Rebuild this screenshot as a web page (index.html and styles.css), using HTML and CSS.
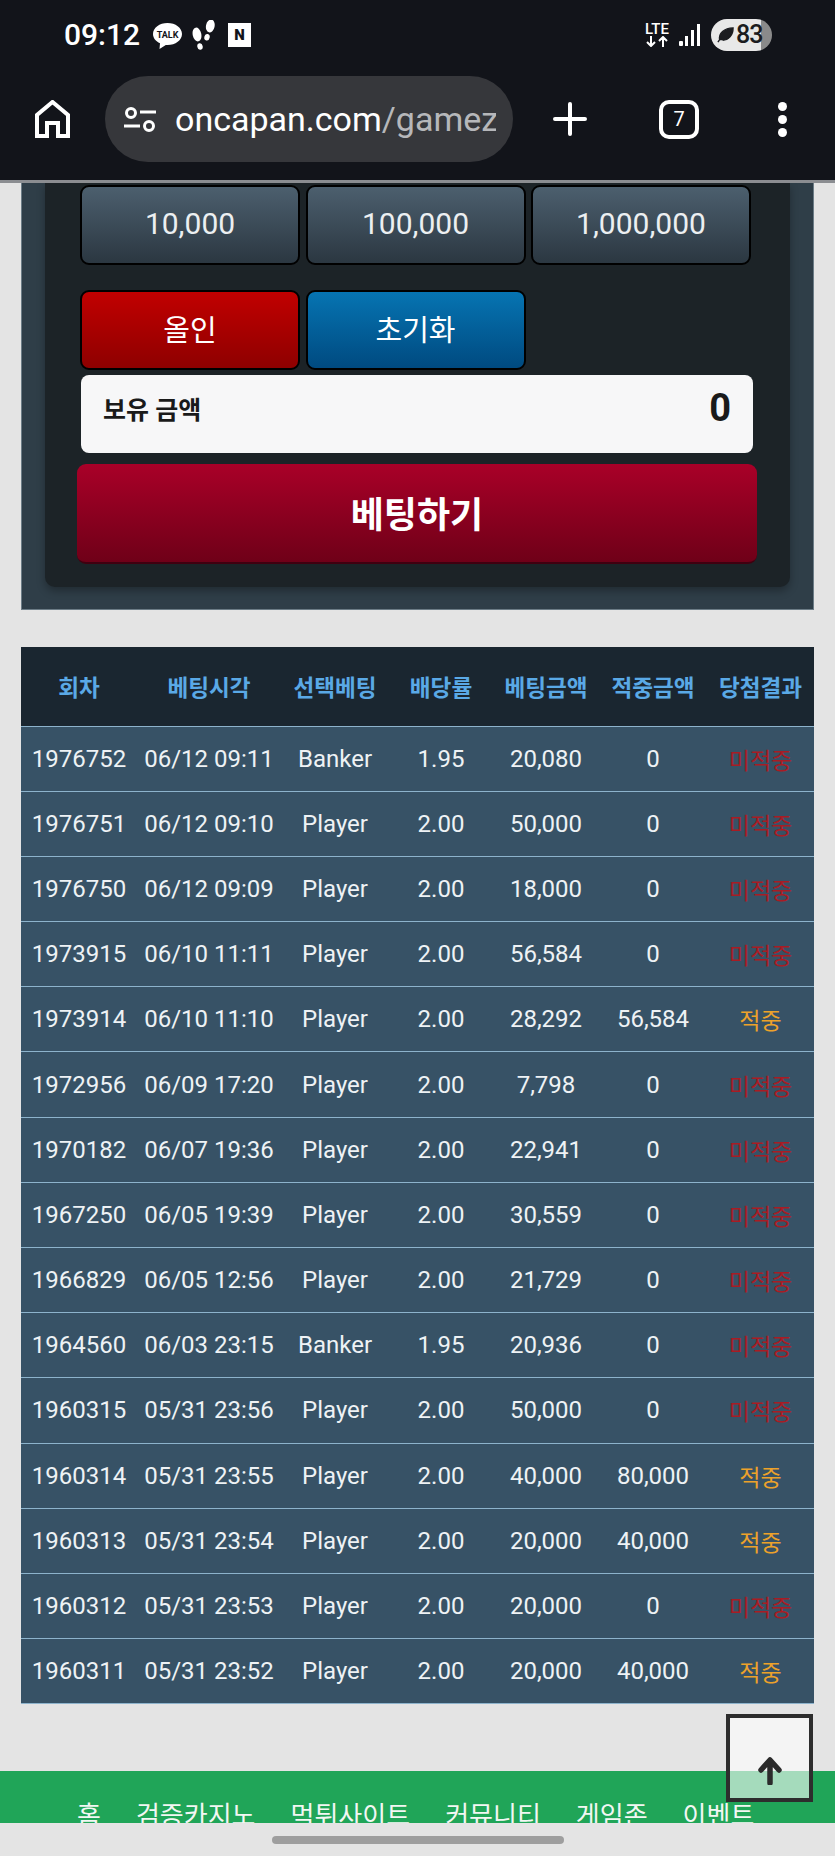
FILE: index.html
```html
<!DOCTYPE html>
<html lang="ko">
<head>
    <meta charset="UTF-8">
    <meta name="viewport" content="width=device-width, initial-scale=1.0">
    <title>oncapan.com</title>
    <link rel="stylesheet" href="styles.css">
</head>
<body>
    <div class="screen">
        <header class="browser">
            <div class="status">
                <span class="clock">09:12</span>
                <svg class="ic-talk" viewBox="0 0 29 26"><path d="M14.5 0C6.5 0 0 4.9 0 11c0 4 2.8 7.400 7 9.300L6.500 26l6.300-4.100c.6 0 1.100.1 1.700.1C22.500 22 29 17.100 29 11S22.500 0 14.500 0z" fill="#fff"/><text x="14.500" y="14.500" class="talk-text" text-anchor="middle">TALK</text></svg>
                <svg class="ic-steps" viewBox="0 0 23 30" fill="#fff"><ellipse cx="5" cy="14.500" rx="4.300" ry="7" transform="rotate(-12 5 14.500)"/><ellipse cx="8" cy="26.500" rx="2.700" ry="3.300" transform="rotate(-12 8 26.500)"/><ellipse cx="18.300" cy="6" rx="4.300" ry="6.500" transform="rotate(12 18.300 6)"/><ellipse cx="15" cy="17.300" rx="2.700" ry="3.300" transform="rotate(12 15 17.300)"/></svg>
                <span class="ic-n">N</span>
                <span class="status-right">
                    <span class="lte">LTE<svg viewBox="0 0 26 11" fill="none" stroke="#fff" stroke-width="2"><path d="M7 0v10M3 6l4 4 4-4M19 11V1M15 5l4-4 4 4"/></svg></span>
                    <svg class="ic-signal" viewBox="0 0 22 22" fill="#fff"><rect x="0" y="17" width="4" height="5" rx="1"/><rect x="6" y="12" width="3" height="10"/><rect x="12" y="6" width="3" height="16"/><rect x="18" y="0" width="3" height="22"/></svg>
                    <span class="battery">
                        <svg viewBox="0 0 18 18"><path d="M1 17c2-3 3-4 4-5M3 15C1 8 8 2 17 2c0 8-5 13-11 13" fill="#1b1c20" stroke="#1b1c20" stroke-width="1.500"/></svg>
                        83
                    </span>
                </span>
            </div>
            <div class="toolbar">
                <svg class="ic-home" viewBox="0 0 35 38" fill="none" stroke="#fff" stroke-width="4"><path d="M2 36V15L17.500 2 33 15v21H23V23H12v13z"/></svg>
                <div class="address">
                    <svg class="ic-tune" viewBox="0 0 32 25" fill="none" stroke="#fff" stroke-width="3"><circle cx="7" cy="6" r="4.500"/><path d="M16 5h16M0 19h16"/><circle cx="25" cy="19" r="4.500"/></svg>
                    <span class="url">oncapan.com<span class="url-path">/gamezone</span></span>
                </div>
                <svg class="ic-plus" viewBox="0 0 34 34" stroke="#fff" stroke-width="4" stroke-linecap="round"><path d="M17 2v30M2 17h30"/></svg>
                <span class="tabs">7</span>
                <span class="dots"><i></i><i></i><i></i></span>
            </div>
        </header>

        <main class="page">
            <section class="bet-panel">
                <div class="bet-inner">
                    <div class="chip-row">
                        <button class="chip">10,000</button>
                        <button class="chip">100,000</button>
                        <button class="chip">1,000,000</button>
                    </div>
                    <div class="chip-row chip-row-second">
                        <button class="chip chip-red">올인</button>
                        <button class="chip chip-blue">초기화</button>
                    </div>
                    <div class="balance">
                        <span class="balance-label">보유 금액</span>
                        <span class="balance-value">0</span>
                    </div>
                    <button class="bet-btn">베팅하기</button>
                </div>
            </section>

            <table class="history">
                <thead>
                    <tr><th>회차</th><th>베팅시각</th><th>선택베팅</th><th>배당률</th><th>베팅금액</th><th>적중금액</th><th>당첨결과</th></tr>
                </thead>
                <tbody>
                    <tr><td>1976752</td><td>06/12 09:11</td><td>Banker</td><td>1.95</td><td>20,080</td><td>0</td><td class="miss">미적중</td></tr>
                    <tr><td>1976751</td><td>06/12 09:10</td><td>Player</td><td>2.00</td><td>50,000</td><td>0</td><td class="miss">미적중</td></tr>
                    <tr><td>1976750</td><td>06/12 09:09</td><td>Player</td><td>2.00</td><td>18,000</td><td>0</td><td class="miss">미적중</td></tr>
                    <tr><td>1973915</td><td>06/10 11:11</td><td>Player</td><td>2.00</td><td>56,584</td><td>0</td><td class="miss">미적중</td></tr>
                    <tr><td>1973914</td><td>06/10 11:10</td><td>Player</td><td>2.00</td><td>28,292</td><td>56,584</td><td class="hit">적중</td></tr>
                    <tr><td>1972956</td><td>06/09 17:20</td><td>Player</td><td>2.00</td><td>7,798</td><td>0</td><td class="miss">미적중</td></tr>
                    <tr><td>1970182</td><td>06/07 19:36</td><td>Player</td><td>2.00</td><td>22,941</td><td>0</td><td class="miss">미적중</td></tr>
                    <tr><td>1967250</td><td>06/05 19:39</td><td>Player</td><td>2.00</td><td>30,559</td><td>0</td><td class="miss">미적중</td></tr>
                    <tr><td>1966829</td><td>06/05 12:56</td><td>Player</td><td>2.00</td><td>21,729</td><td>0</td><td class="miss">미적중</td></tr>
                    <tr><td>1964560</td><td>06/03 23:15</td><td>Banker</td><td>1.95</td><td>20,936</td><td>0</td><td class="miss">미적중</td></tr>
                    <tr><td>1960315</td><td>05/31 23:56</td><td>Player</td><td>2.00</td><td>50,000</td><td>0</td><td class="miss">미적중</td></tr>
                    <tr><td>1960314</td><td>05/31 23:55</td><td>Player</td><td>2.00</td><td>40,000</td><td>80,000</td><td class="hit">적중</td></tr>
                    <tr><td>1960313</td><td>05/31 23:54</td><td>Player</td><td>2.00</td><td>20,000</td><td>40,000</td><td class="hit">적중</td></tr>
                    <tr><td>1960312</td><td>05/31 23:53</td><td>Player</td><td>2.00</td><td>20,000</td><td>0</td><td class="miss">미적중</td></tr>
                    <tr><td>1960311</td><td>05/31 23:52</td><td>Player</td><td>2.00</td><td>20,000</td><td>40,000</td><td class="hit">적중</td></tr>
                </tbody>
            </table>

            <footer class="site-foot">
                <nav class="foot-nav">
                    <a>홈</a><a>검증카지노</a><a>먹튀사이트</a><a>커뮤니티</a><a>게임존</a><a>이벤트</a>
                </nav>
            </footer>

            <button class="to-top">
                <svg viewBox="0 0 28 28" fill="none" stroke="#2b2b2b" stroke-width="5.500" stroke-linecap="round" stroke-linejoin="round"><path d="M14 26V4M5 13l9-10 9 10"/></svg>
            </button>
        </main>

        <div class="gesture"><span class="pill"></span></div>
    </div>
</body>
</html>
```

FILE: styles.css
```css
* {
    box-sizing: border-box;
}

body {
    margin: 0;
    background: #e4e4e4;
    font-family: Roboto, "Noto Sans CJK KR", sans-serif;
}

.screen {
    width: 835px;
    height: 1856px;
    display: flex;
    flex-direction: column;
    overflow: hidden;
}

/* browser chrome */
.browser {
    height: 183px;
    flex: none;
    background: #12141a;
    border-bottom: 3px solid #8b8d91;
    color: #fff;
}

.status {
    height: 59px;
    padding: 10px 63px 0 64px;
    display: flex;
    align-items: center;
}

.clock {
    font-size: 30px;
    font-weight: 500;
    width: 89px;
}

.ic-talk {
    width: 29px;
    height: 26px;
    margin-top: 2px;
}

.talk-text {
    font-size: 9px;
    font-weight: 700;
    fill: #12141a;
}

.ic-steps {
    width: 23px;
    height: 30px;
    margin-left: 10px;
}

.ic-n {
    width: 23px;
    height: 24px;
    margin-left: 13px;
    background: #fff;
    color: #12141a;
    font-size: 15px;
    font-weight: 900;
    text-align: center;
    line-height: 24px;
}

.status-right {
    margin-left: auto;
    display: flex;
    align-items: center;
}

.lte {
    width: 26px;
    font-size: 15px;
    font-weight: 500;
    line-height: 13px;
    display: flex;
    flex-direction: column;
    align-items: center;
}

.lte svg {
    width: 26px;
    height: 11px;
}

.ic-signal {
    width: 22px;
    height: 22px;
    margin-left: 9px;
}

.battery {
    width: 61px;
    height: 32px;
    margin-left: 10px;
    padding-left: 6px;
    border-radius: 16px;
    background: linear-gradient(90deg, #e8e8e8 82%, #8a8a8a 82%);
    color: #1b1c20;
    font-size: 25px;
    font-weight: 500;
    letter-spacing: -1px;
    display: flex;
    align-items: center;
    gap: 2px;
}

.battery svg {
    width: 17px;
    height: 17px;
    flex: none;
}

.toolbar {
    height: 120px;
    display: flex;
    align-items: center;
}

.ic-home {
    width: 35px;
    height: 38px;
    margin: 0 0 0 35px;
}

.address {
    width: 408px;
    height: 86px;
    margin-left: 35px;
    padding-left: 19px;
    border-radius: 43px;
    background: #36373b;
    display: flex;
    align-items: center;
}

.ic-tune {
    width: 32px;
    height: 25px;
    flex: none;
}

.url {
    width: 321px;
    margin-left: 19px;
    overflow: hidden;
    white-space: nowrap;
    font-size: 34px;
}

.url-path {
    color: #b6b7ba;
}

.ic-plus {
    width: 34px;
    height: 34px;
    margin-left: 40px;
}

.tabs {
    width: 40px;
    height: 39px;
    margin-left: 72px;
    border: 4px solid #fff;
    border-radius: 10px;
    font-size: 20px;
    text-align: center;
    line-height: 31px;
}

.dots {
    margin-left: 79px;
    display: flex;
    flex-direction: column;
    gap: 4px;
}

.dots i {
    width: 9px;
    height: 9px;
    border-radius: 50%;
    background: #fff;
}

/* page */
.page {
    flex: 1;
    position: relative;
    overflow: hidden;
    background: #e4e4e4;
}

.bet-panel {
    margin: 0 21px;
    padding: 0 23px 22px;
    background: #2f3e48;
    border: 1px solid #6c7c86;
    border-top: 0;
}

.bet-inner {
    padding: 2px 33px 23px;
    background: #1c2327;
    border-radius: 0 0 10px 10px;
    box-shadow: 0 4px 8px rgba(0, 0, 0, 0.3);
}

.chip-row {
    display: grid;
    grid-template-columns: repeat(3, 220px);
    gap: 5.500px;
    margin-left: 2px;
}

.chip-row-second {
    margin-top: 25px;
}

.chip {
    height: 80px;
    padding: 0 0 4px;
    border: 2px solid #000;
    border-radius: 9px;
    background: linear-gradient(#4c5f6e, #2b3741);
    color: #eceff1;
    font-family: inherit;
    font-size: 30px;
}

.chip-red,
.chip-blue {
    font-size: 29px;
    color: #fff;
}

.chip-red {
    background: linear-gradient(#c10000, #8e0000);
}

.chip-blue {
    background: linear-gradient(#0674b2, #004a80);
}

.balance {
    height: 78px;
    margin: 5px 0 0 3px;
    width: 672px;
    padding: 15px 22px 0;
    background: #f7f7f8;
    border-radius: 8px;
    display: flex;
    justify-content: space-between;
    color: #1a1a1a;
    font-weight: 700;
}

.balance-label {
    margin-top: 1px;
    font-size: 25px;
    line-height: 40px;
}

.balance-value {
    font-size: 38px;
    line-height: 36px;
}

.bet-btn {
    display: block;
    width: 680px;
    height: 100px;
    margin: 11px 0 0 -1px;
    padding: 0 0 2px;
    border: 0;
    border-bottom: 2px solid #3f0010;
    border-radius: 9px;
    background: linear-gradient(#a90028, #6f0018);
    color: #fff;
    font-family: inherit;
    font-size: 36px;
    font-weight: 700;
}

.history {
    width: 793px;
    margin: 37px 0 0 21px;
    border-collapse: collapse;
    table-layout: fixed;
}

.history th {
    height: 79px;
    background: #1a2630;
    color: #5aa9e6;
    font-size: 22.600px;
    font-weight: 700;
    padding: 0;
}

.history td {
    height: 65.200px;
    padding: 0;
    background: #375266;
    border-top: 1px solid #8db3cc;
    color: #eef2f5;
    font-size: 24px;
    text-align: center;
    white-space: nowrap;
}

.history tr:last-child td {
    border-bottom: 1px solid #8db3cc;
}

.history th:nth-child(1) { width: 116px; }
.history th:nth-child(2) { width: 144px; }
.history th:nth-child(3) { width: 108px; }
.history th:nth-child(4) { width: 104px; }
.history th:nth-child(5) { width: 106px; }
.history th:nth-child(6) { width: 108px; }

.history td.miss {
    color: #a81c24;
    font-size: 23px;
}

.history td.hit {
    color: #eda22a;
    font-size: 23px;
}

.site-foot {
    height: 53px;
    margin-top: 67px;
    background: #20a558;
    overflow: hidden;
}

.foot-nav {
    display: flex;
    gap: 35px;
    padding: 24px 0 0 77px;
    color: #f2f7f3;
    font-size: 26px;
    white-space: nowrap;
}

/* floating scroll button */
.to-top {
    position: absolute;
    left: 726px;
    top: 1531px;
    width: 87px;
    height: 88px;
    border: 4px solid #2d2d2d;
    background: rgba(255, 255, 255, 0.6);
    padding: 0;
}

.to-top svg {
    width: 28px;
    height: 28px;
    display: block;
    margin: 26px auto 0;
}

.gesture {
    height: 33px;
    flex: none;
    background: #e4e4e4;
    padding-top: 13px;
}

.pill {
    display: block;
    width: 292px;
    height: 8px;
    margin: 0 auto;
    border-radius: 4px;
    background: #9e9e9e;
}
```
